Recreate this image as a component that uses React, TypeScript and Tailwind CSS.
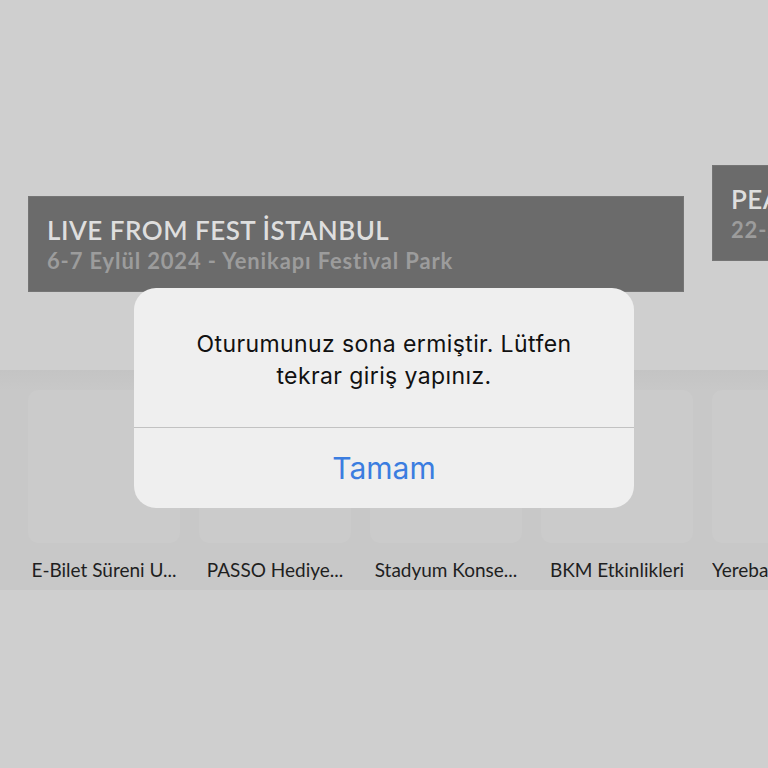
import React from "react";

const tiles = [
  { t: "E-Bilet Süreni U...", left: false },
  { t: "PASSO Hediye...", left: false },
  { t: "Stadyum Konse...", left: false },
  { t: "BKM Etkinlikleri", left: false },
  { t: "Yerebatan Sarnıcı", left: true },
];

export default function App() {
  return (
    <div className="relative w-[768px] h-[768px] overflow-hidden bg-[#cfcfcf]" style={{ fontFamily: "Lato, 'Noto Sans', sans-serif" }}>
      <div className="flex items-start gap-[28px] pl-[28px] pt-[165px] h-[370px]">
        <div className="mt-[31px] w-[656px] h-[96px] shrink-0 bg-[#6b6b6b] border border-[#757575] pl-[18px] pt-[17px]">
          <div className="text-[26px] leading-[32px] font-semibold text-[#dedede] tracking-[0.5px]">LIVE FROM FEST İSTANBUL</div>
          <div className="text-[22px] leading-[30px] font-bold text-[#9c9c9c] tracking-[0.85px]">6-7 Eylül 2024 - Yenikapı Festival Park</div>
        </div>
        <div className="w-[300px] h-[96px] shrink-0 bg-[#6b6b6b] border border-[#757575] pl-[18px] pt-[17px]">
          <div className="text-[26px] leading-[32px] font-semibold text-[#dedede] tracking-[0.5px]">PEARL JAM</div>
          <div className="text-[22px] leading-[30px] font-bold text-[#9c9c9c] tracking-[0.85px]">22-23 Eylül 2024</div>
        </div>
      </div>

      <div className="h-[220px] bg-[#c8c8c8] pt-[20px] pl-[28px]" style={{ backgroundImage: "linear-gradient(to bottom, #c4c4c4 0px, #c8c8c8 20px)" }}>
        <div className="flex gap-[19px]">
          {tiles.map(({ t, left }) => (
            <div key={t} className="w-[152px] shrink-0 flex flex-col">
              <div className="h-[153px] rounded-[10px] bg-[#cbcbcb]" />
              <div className={left ? "mt-[16px] text-[19px] leading-[22px] text-[#1f1f1f] text-left whitespace-nowrap overflow-hidden" : "mt-[16px] text-[19px] leading-[22px] text-[#1f1f1f] text-center whitespace-nowrap overflow-hidden"}>{t}</div>
            </div>
          ))}
        </div>
      </div>

      <div className="absolute left-[134px] top-[288px] w-[500px] h-[220px] rounded-[22px] bg-[#efefef] flex flex-col overflow-hidden" style={{ fontFamily: "Inter, Roboto, sans-serif" }}>
        <div className="h-[139px] pt-[40px] text-center text-[23px] leading-[32px] tracking-[0.4px] text-[#111]">
          Oturumunuz sona ermiştir. Lütfen<br />tekrar giriş yapınız.
        </div>
        <div className="h-px bg-[#c2c2c2]" />
        <div className="flex-1 flex items-center justify-center text-[30px] text-[#3b7de0]">Tamam</div>
      </div>
    </div>
  );
}
